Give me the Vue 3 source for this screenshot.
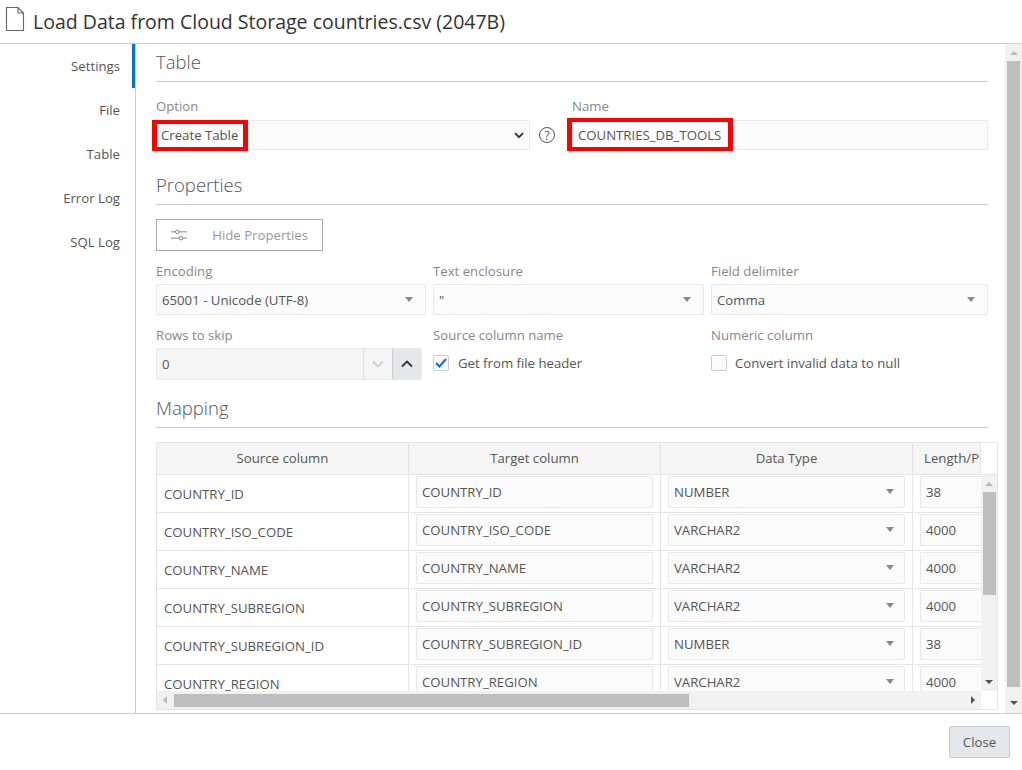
<template>
  <div class="dialog">
    <header class="dialog-head">
      <svg class="file-icon" width="20" height="26" viewBox="0 0 20 26">
        <path d="M1.500 1.500h11.500l5.500 5.500v17.500h-17z M13 1.500v5.500h5.500" fill="none" stroke="#666" stroke-width="1.100" />
      </svg>
      <h1>Load Data from Cloud Storage countries.csv (2047B)</h1>
    </header>

    <div class="dialog-body">
      <nav class="side-nav">
        <a v-for="(item, i) in navItems" :key="item" class="nav-item" :class="{ active: i === 0 }">{{ item }}</a>
      </nav>

      <main class="content">
        <h2 class="section-title first">Table</h2>
        <div class="option-row">
          <div class="option-col">
            <label class="field-label">Option</label>
            <div class="field">
              <span class="marked">Create Table</span>
              <svg class="chevron" width="10" height="7" viewBox="0 0 10 7">
                <path d="M1 1.200l4 4 4-4" fill="none" stroke="#333" stroke-width="1.800" />
              </svg>
            </div>
          </div>
          <svg class="help" width="18" height="18" viewBox="0 0 18 18">
            <circle cx="9" cy="9" r="7.500" fill="none" stroke="#555" stroke-width="1" />
            <text x="9" y="13.500" text-anchor="middle" font-size="12" fill="#555">?</text>
          </svg>
          <div class="name-col">
            <label class="field-label">Name</label>
            <div class="field">
              <span class="marked name-mark">COUNTRIES_DB_TOOLS</span>
            </div>
          </div>
        </div>

        <h2 class="section-title">Properties</h2>
        <button class="props-btn">
          <svg width="18" height="14" viewBox="0 0 18 14">
            <path d="M0 3.500h5M9 3.500h9M0 10.500h9M13 10.500h5" fill="none" stroke="#777" stroke-width="1" />
            <circle cx="7" cy="3.500" r="2" fill="none" stroke="#777" stroke-width="1" />
            <circle cx="11" cy="10.500" r="2" fill="none" stroke="#777" stroke-width="1" />
          </svg>
          <span>Hide Properties</span>
        </button>

        <div class="props-grid">
          <div v-for="p in dropdowns" :key="p.label" class="prop">
            <label class="field-label short">{{ p.label }}</label>
            <div class="field tall">
              <span>{{ p.value }}</span>
              <i class="caret"></i>
            </div>
          </div>
          <div class="prop">
            <label class="field-label short">Rows to skip</label>
            <div class="spinner">
              <span class="spin-value">0</span>
              <span class="spin-btn">
                <svg width="12" height="8" viewBox="0 0 12 8"><path d="M1 1.500l5 5 5-5" fill="none" stroke="#ccc" stroke-width="1.800" /></svg>
              </span>
              <span class="spin-btn up">
                <svg width="12" height="8" viewBox="0 0 12 8"><path d="M1 6.500l5-5 5 5" fill="none" stroke="#333" stroke-width="1.800" /></svg>
              </span>
            </div>
          </div>
          <div class="prop">
            <label class="field-label short">Source column name</label>
            <div class="check-row">
              <span class="check">
                <svg width="12" height="10" viewBox="0 0 12 10"><path d="M1 5l3.500 3.500 6.500-7.500" fill="none" stroke="#0572ce" stroke-width="2" /></svg>
              </span>
              <span>Get from file header</span>
            </div>
          </div>
          <div class="prop">
            <label class="field-label short">Numeric column</label>
            <div class="check-row unchecked">
              <span class="check"></span>
              <span>Convert invalid data to null</span>
            </div>
          </div>
        </div>

        <h2 class="section-title">Mapping</h2>
        <div class="grid-box">
          <div class="grid-head">
            <div class="cell head">Source column</div>
            <div class="cell head">Target column</div>
            <div class="cell head">Data Type</div>
            <div class="cell head last">Length/Precision</div>
            <div class="head-filler"></div>
          </div>
          <div class="grid-middle">
            <div class="grid-rows">
              <div v-for="row in rows" :key="row.name" class="grid-row">
                <div class="cell source">{{ row.name }}</div>
                <div class="cell"><div class="field cell-field">{{ row.name }}</div></div>
                <div class="cell">
                  <div class="field cell-field">
                    <span>{{ row.type }}</span>
                    <i class="caret"></i>
                  </div>
                </div>
                <div class="cell last"><div class="field cell-field open-end">{{ row.length }}</div></div>
              </div>
            </div>
            <div class="vbar">
              <i class="arrow-up"></i>
              <div class="vthumb"></div>
              <i class="arrow-down"></i>
            </div>
          </div>
          <div class="hbar-row">
            <div class="hbar">
              <i class="arrow-left"></i>
              <div class="hthumb"></div>
              <i class="arrow-right"></i>
            </div>
            <div class="corner"></div>
          </div>
        </div>
      </main>

      <div class="page-bar">
        <i class="arrow-up"></i>
        <div class="page-thumb"></div>
        <i class="arrow-down"></i>
      </div>
    </div>

    <footer class="dialog-foot">
      <button class="close-btn">Close</button>
    </footer>
  </div>
</template>

<script setup>
const navItems = ['Settings', 'File', 'Table', 'Error Log', 'SQL Log'];

const dropdowns = [
  { label: 'Encoding', value: '65001 - Unicode (UTF-8)' },
  { label: 'Text enclosure', value: '"' },
  { label: 'Field delimiter', value: 'Comma' },
];

const rows = [
  { name: 'COUNTRY_ID', type: 'NUMBER', length: '38' },
  { name: 'COUNTRY_ISO_CODE', type: 'VARCHAR2', length: '4000' },
  { name: 'COUNTRY_NAME', type: 'VARCHAR2', length: '4000' },
  { name: 'COUNTRY_SUBREGION', type: 'VARCHAR2', length: '4000' },
  { name: 'COUNTRY_SUBREGION_ID', type: 'NUMBER', length: '38' },
  { name: 'COUNTRY_REGION', type: 'VARCHAR2', length: '4000' },
];
</script>

<style>
html, body {
  margin: 0;
  background: #fff;
}
</style>

<style scoped>
.dialog {
  width: 1022px;
  height: 770px;
  display: flex;
  flex-direction: column;
  overflow: hidden;
  font-family: "Open Sans", "Noto Sans", sans-serif;
  font-size: 13.200px;
  color: #555;
}

.dialog-head {
  height: 43px;
  flex: none;
  display: flex;
  align-items: center;
  gap: 8px;
  padding-left: 5px;
  border-bottom: 1px solid #ccc;
}

.file-icon {
  margin-bottom: 6px;
}

.dialog-head h1 {
  margin: 0;
  font-size: 19.500px;
  font-weight: 400;
  color: #333;
}

.dialog-body {
  height: 669px;
  flex: none;
  display: flex;
}

.side-nav {
  width: 135px;
  flex: none;
  border-right: 1px solid #ccc;
  display: flex;
  flex-direction: column;
}

.nav-item {
  height: 44px;
  line-height: 44px;
  padding-right: 15px;
  text-align: right;
  color: #555;
}

.nav-item.active {
  border-right: 3px solid #0572ce;
  padding-right: 12px;
}

.content {
  flex: 1;
  min-width: 0;
  overflow: hidden;
  padding: 0 17px 0 20px;
}

.section-title {
  margin: 0;
  height: 38px;
  line-height: 38px;
  font-size: 18.500px;
  font-weight: 300;
  color: #555;
  border-bottom: 1px solid #ccc;
}

.section-title.first {
  height: 37px;
  line-height: 36px;
}

.field-label {
  display: block;
  height: 22px;
  line-height: 17px;
  color: #888;
}

.field-label.short {
  height: 21px;
}

.option-row {
  display: flex;
  margin-top: 16px;
  height: 68px;
}

.option-col {
  width: 374px;
  flex: none;
}

.help {
  flex: none;
  margin: 28px 16px 0 8px;
}

.name-col {
  flex: 1;
  min-width: 0;
}

.field {
  position: relative;
  height: 28px;
  display: flex;
  align-items: center;
  padding: 0 5px;
  background: #fbfbfb;
  border: 1px solid #e8e8e8;
  border-radius: 2px;
  color: #555;
  white-space: nowrap;
}

.field.tall {
  height: 29px;
}

.marked {
  position: relative;
  line-height: 16px;
  margin-left: -1px;
}

/* annotation frame drawn over the screenshot */
.marked::after {
  content: "";
  position: absolute;
  left: -9px;
  right: -10px;
  top: -7px;
  bottom: -8px;
  border-style: solid;
  border-color: #f00;
  border-width: 4px 5px;
}

.name-mark {
  margin-left: 0;
}

.name-mark::after {
  left: -11px;
  right: -12px;
  top: -9px;
  bottom: -8px;
}

.chevron {
  position: absolute;
  right: 5px;
  top: 11px;
}

.props-btn {
  display: flex;
  align-items: center;
  width: 167px;
  height: 32px;
  margin-top: 14px;
  padding: 0 14px;
  background: #fff;
  border: 1px solid #aaa;
  color: #999;
  font: inherit;
  white-space: nowrap;
}

.props-btn span {
  margin-left: 25px;
}

.props-grid {
  display: grid;
  grid-template-columns: 270px 271px 277px;
  grid-template-rows: 64px 62px;
  column-gap: 7px;
  margin-top: 12px;
}

.prop {
  min-width: 0;
}

.caret {
  position: absolute;
  right: 12px;
  top: 50%;
  margin-top: -3px;
  border-style: solid;
  border-width: 5.500px 4.500px 0;
  border-color: #888 transparent transparent;
}

.cell-field .caret {
  right: 10px;
}

.spinner {
  width: 266px;
  height: 32px;
  display: flex;
  background: #f5f5f5;
  border: 1px solid #e8e8e8;
  border-radius: 2px;
  box-sizing: border-box;
}

.spin-value {
  flex: 1;
  line-height: 30px;
  padding-left: 5px;
}

.spin-btn {
  width: 28px;
  display: flex;
  align-items: center;
  justify-content: center;
  border-left: 1px solid #ddd;
}

.spin-btn.up {
  background: #e4e8ea;
  border-left-color: #ccc;
}

.check-row {
  display: flex;
  align-items: center;
  gap: 9px;
  height: 30px;
}

.check-row.unchecked {
  gap: 8px;
}

.check {
  width: 14px;
  height: 14px;
  flex: none;
  display: flex;
  align-items: center;
  justify-content: center;
  background: #fbfbfb;
  border: 1px solid #c4ced7;
  border-radius: 2px;
}

.grid-box {
  width: 842px;
  height: 268px;
  margin-top: 14px;
  box-sizing: border-box;
  border: 1px solid #e4e4e4;
  display: flex;
  flex-direction: column;
  overflow: hidden;
}

.grid-head {
  height: 32px;
  flex: none;
  display: flex;
  background: #f5f5f5;
  border-bottom: 1px solid #e4e4e4;
  box-sizing: border-box;
}

.cell {
  width: 252px;
  flex: none;
  box-sizing: border-box;
  border-right: 1px solid #e4e4e4;
  padding: 0 7px;
}

.cell.head {
  line-height: 31px;
  text-align: center;
  color: #555;
  white-space: nowrap;
  overflow: hidden;
}

.cell.last {
  width: 68px;
  border-right: none;
}

.cell.head.last {
  border-right: 1px solid #e4e4e4;
  padding: 0 0 0 11px;
  text-align: left;
}

.head-filler {
  flex: 1;
  background: #fff;
}

.grid-middle {
  height: 216px;
  flex: none;
  display: flex;
}

.grid-rows {
  width: 824px;
  flex: none;
  overflow: hidden;
}

.grid-row {
  height: 38px;
  display: flex;
  box-sizing: border-box;
  border-bottom: 1px solid #e4e4e4;
}

.cell.source {
  line-height: 38px;
  white-space: nowrap;
}

.cell-field {
  height: 32px;
  margin-top: 1px;
  box-sizing: border-box;
}

.open-end {
  border-right: none;
  margin-right: -8px;
}

.vbar {
  flex: 1;
  background: #f1f1f1;
  display: flex;
  flex-direction: column;
  align-items: center;
  padding-top: 7px;
  box-sizing: border-box;
}

.vthumb {
  width: 13px;
  height: 103px;
  margin-top: 6px;
  background: #bebebe;
}

.vbar .arrow-down {
  margin-top: auto;
  margin-bottom: 7px;
}

.page-bar {
  width: 17px;
  flex: none;
  background: #f1f1f1;
  display: flex;
  flex-direction: column;
  align-items: center;
  padding-top: 7px;
  box-sizing: border-box;
}

.page-thumb {
  width: 13px;
  height: 626px;
  margin-top: 6px;
  background: #bebebe;
}

.page-bar .arrow-down {
  margin-top: 14px;
}

.arrow-up, .arrow-down {
  display: block;
  border-style: solid;
  border-color: transparent;
}

.arrow-up {
  border-width: 0 4px 4px;
  border-bottom-color: #bbb;
}

.arrow-down {
  border-width: 4px 4px 0;
  border-top-color: #555;
}

.hbar-row {
  height: 18px;
  flex: none;
  display: flex;
}

.hbar {
  width: 824px;
  flex: none;
  display: flex;
  align-items: center;
  background: #f1f1f1;
  box-sizing: border-box;
  padding: 0 6px;
}

.hthumb {
  width: 515px;
  height: 13px;
  margin-left: 7px;
  background: #bebebe;
}

.arrow-left, .arrow-right {
  display: block;
  border-style: solid;
  border-color: transparent;
}

.arrow-left {
  border-width: 4px 4px 4px 0;
  border-right-color: #bbb;
}

.arrow-right {
  margin-left: auto;
  border-width: 4px 0 4px 4px;
  border-left-color: #555;
}

.corner {
  flex: 1;
  background: #fff;
}

.dialog-foot {
  flex: 1;
  display: flex;
  justify-content: flex-end;
  align-items: flex-start;
  padding: 12px 12px 0 0;
  border-top: 1px solid #ccc;
}

.close-btn {
  width: 61px;
  height: 32px;
  background: #e4e8ea;
  border: 1px solid #c4ced7;
  border-radius: 2px;
  color: #555;
  font: inherit;
}
</style>
